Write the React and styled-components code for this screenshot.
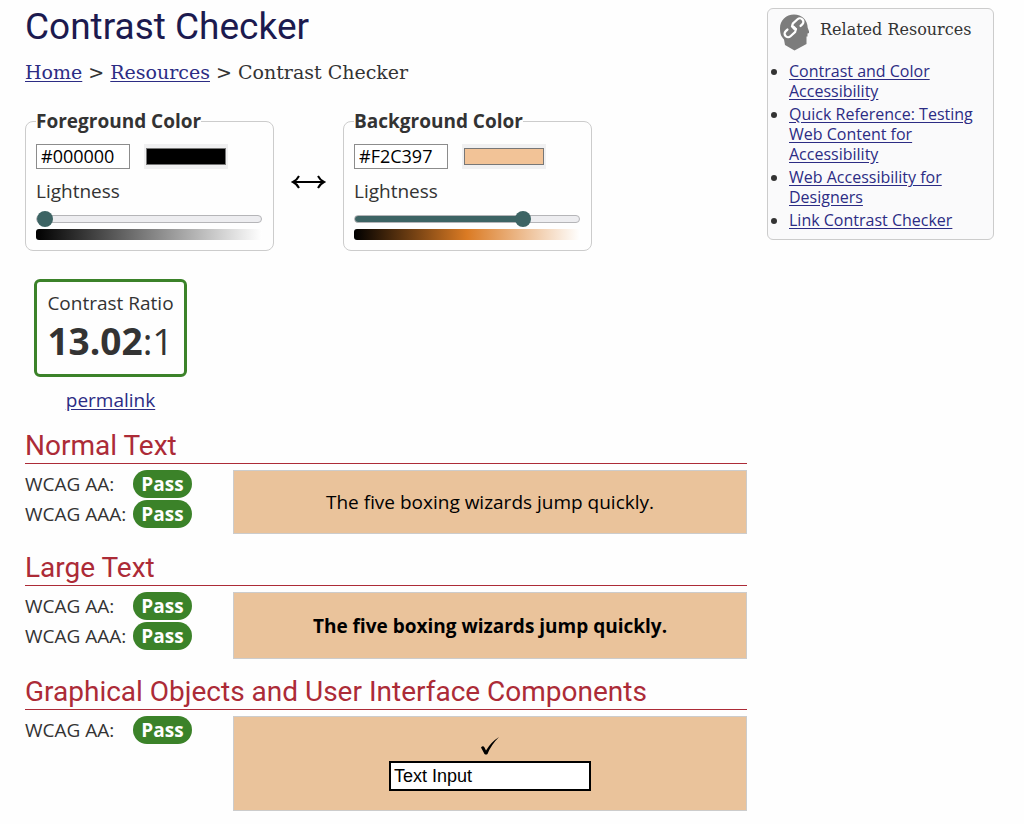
import React, { useState } from 'react';
import styled, { createGlobalStyle } from 'styled-components';

const GlobalStyle = createGlobalStyle`
  * { box-sizing: border-box; }
  body {
    margin: 0;
    background: #fefefe;
    color: #333;
    font-family: "Open Sans", "Noto Sans", sans-serif;
    font-size: 19px;
    line-height: 24px;
  }
  a { color: #2c2c84; text-underline-offset: 2px; }
`;

const Page = styled.div`
  display: flex;
  align-items: flex-start;
  gap: 20px;
  padding: 4px 30px 14px 25px;
`;

const Main = styled.main`
  flex: 1;
  min-width: 0;
`;

const Title = styled.h1`
  margin: 0;
  font: 400 37px/46px Roboto, sans-serif;
  color: #1c1a4f;
`;

const Breadcrumb = styled.nav`
  margin-top: 10px;
  font: 19px/24px "DejaVu Serif", serif;
`;

const Pickers = styled.div`
  display: flex;
  align-items: center;
  gap: 16px;
  margin-top: 25px;
`;

const Picker = styled.fieldset`
  width: 249px;
  margin: 0;
  padding: 11px 11px 10px 10px;
  border: 1px solid #ccc;
  border-radius: 8px;
`;

const Legend = styled.legend`
  padding: 0;
  font-weight: 700;
`;

const ColorRow = styled.div`
  display: flex;
  gap: 14px;
`;

const HexInput = styled.input`
  width: 94px;
  height: 25px;
  padding: 0 4px 2px;
  border: 1px solid #8c8c8c;
  border-radius: 0;
  background: #fff;
  color: #000;
  font: 18px/22px "Open Sans", "Noto Sans", sans-serif;
`;

const Swatch = styled.input`
  width: 84px;
  height: 25px;
  padding: 4px 2px;
  border: 0;
  background: #f0f0f1;
  &::-webkit-color-swatch-wrapper { padding: 0; }
  &::-webkit-color-swatch { border: 1px solid #777; }
`;

const RangeLabel = styled.label`
  display: block;
  margin-top: 10px;
`;

const Range = styled.input`
  display: block;
  width: 100%;
  height: 16px;
  margin: 8px 0 2px;
  appearance: none;
  background: transparent;
  &::-webkit-slider-runnable-track {
    height: 8px;
    border: 1px solid #b5b5b8;
    border-radius: 4px;
    background: linear-gradient(#3d6464, #3d6464) 0 0 / var(--fill) 100% no-repeat border-box, #ededf0;
  }
  &::-webkit-slider-thumb {
    appearance: none;
    width: 16px;
    height: 16px;
    margin-top: -5px;
    border-radius: 50%;
    background: #3d6464;
  }
`;

const Scale = styled.div`
  height: 11px;
  border-radius: 3px;
  background: linear-gradient(to right, #000, ${(p) => p.$middle}, #fff);
`;

const SwapButton = styled.button`
  display: flex;
  padding: 0;
  margin-top: 4px;
  border: 0;
  background: none;
  color: #000;
`;

const Result = styled.div`
  display: flex;
  flex-direction: column;
  align-items: center;
  width: 153px;
  margin: 28px 0 0 9px;
`;

const RatioBox = styled.div`
  width: 100%;
  height: 98px;
  padding: 9px 0;
  border: 3px solid #3b8229;
  border-radius: 6px;
  text-align: center;
`;

const Ratio = styled.div`
  font-size: 37px;
  line-height: 52px;
  b { font-weight: 700; }
`;

const Permalink = styled.a`
  margin-top: 11px;
`;

const Level = styled.section`
  margin-top: ${(p) => p.$gap}px;
`;

const Heading = styled.h2`
  margin: 0 0 6px;
  border-bottom: 1px solid #ac2b37;
  font: 400 28px/35px Roboto, sans-serif;
  color: #ac2b37;
`;

const Columns = styled.div`
  display: grid;
  grid-template-columns: 208px 1fr;
  align-items: start;
`;

const Checks = styled.dl`
  display: grid;
  grid-template-columns: 108px 59px;
  row-gap: 2px;
  line-height: 28px;
  margin: 0;
`;

const Verdict = styled.dd`
  margin: 0;
  border-radius: 14px;
  background: #3b8229;
  color: #fff;
  font-weight: 700;
  text-align: center;
`;

const Sample = styled.div`
  display: flex;
  flex-direction: column;
  align-items: center;
  justify-content: center;
  height: ${(p) => p.$height}px;
  border: 1px solid #ccc;
  background: #eac39b;
  color: #000;
  font-weight: ${(p) => (p.$large ? 700 : 400)};
`;

const SampleInput = styled.input`
  width: 202px;
  height: 30px;
  margin-top: 5px;
  padding: 0 3px;
  border: 2px solid #000;
  background: #fff;
  color: #000;
  font: 18px "Liberation Sans", Arial, sans-serif;
`;

const Related = styled.aside`
  flex: 0 0 227px;
  margin-top: 4px;
  padding: 5px 11px 9px;
  border: 1px solid #ccc;
  border-radius: 6px;
  background: #fafafb;
`;

const RelatedTitle = styled.h2`
  display: flex;
  gap: 11px;
  margin: 0;
  font: 400 16px/31px "DejaVu Serif", serif;
  white-space: nowrap;
`;

const RelatedList = styled.ul`
  display: flex;
  flex-direction: column;
  gap: 3px;
  margin: 10px 0 0;
  padding-left: 10px;
  font-size: 16px;
  line-height: 20px;
`;

function HeadIcon() {
  return (
    <svg width="30" height="37" viewBox="0 0 30 37" aria-hidden="true">
      <path
        fill="#7c7c7c"
        d="M15 0.500C7 0.500 1 6.500 1 14c0 6 1 8 4 11.500l1 5.500 9.500 5.500L27.500 30v-7.500h1V19.500l2-0.800-1.800-5C28.500 6 23 0.500 15 0.500Z"
      />
      <g fill="none" stroke="#fff" strokeWidth="2.300" strokeLinecap="round">
        <path transform="translate(18.500 10) rotate(-42)" d="M-4.500 2.800A3.700 3.700 0 0 1-3 -3.500H3.200a3.500 3.500 0 0 1 0 7H1" />
        <path transform="translate(11.500 17.500) rotate(138)" d="M-4.500 2.800A3.700 3.700 0 0 1-3 -3.500H3.200a3.500 3.500 0 0 1 0 7H1" />
      </g>
    </svg>
  );
}

function SwapIcon() {
  return (
    <svg width="37" height="16" viewBox="0 0 37 16" fill="none" stroke="currentColor" strokeWidth="2" aria-hidden="true">
      <path d="M3 8h31M9 2Q7 6 3 8q4 2 6 6M28 2q2 4 6 6-4 2-6 6" />
    </svg>
  );
}

function ColorPicker({ id, name, hex, onHex, lightness, middle }) {
  const [value, setValue] = useState(lightness);
  return (
    <Picker>
      <Legend>{name}</Legend>
      <ColorRow>
        <HexInput aria-label={`${name} hex value`} value={hex} onChange={(e) => onHex(e.target.value)} />
        <Swatch
          type="color"
          aria-label={`${name} picker`}
          value={hex.toLowerCase()}
          onChange={(e) => onHex(e.target.value.toUpperCase())}
        />
      </ColorRow>
      <RangeLabel htmlFor={id}>Lightness</RangeLabel>
      <Range
        id={id}
        type="range"
        min="0"
        max="100"
        value={value}
        onChange={(e) => setValue(Number(e.target.value))}
        style={{ '--fill': `${value}%` }}
      />
      <Scale $middle={middle} />
    </Picker>
  );
}

function Conformance({ title, levels, gap, children }) {
  return (
    <Level $gap={gap}>
      <Heading>{title}</Heading>
      <Columns>
        <Checks>
          {levels.map((level) => (
            <React.Fragment key={level}>
              <dt>WCAG {level}:</dt>
              <Verdict>Pass</Verdict>
            </React.Fragment>
          ))}
        </Checks>
        {children}
      </Columns>
    </Level>
  );
}

const resources = [
  'Contrast and Color Accessibility',
  'Quick Reference: Testing Web Content for Accessibility',
  'Web Accessibility for Designers',
  'Link Contrast Checker',
];

export default function App() {
  const [fore, setFore] = useState('#000000');
  const [back, setBack] = useState('#F2C397');
  const swap = () => {
    setFore(back);
    setBack(fore);
  };

  return (
    <>
      <GlobalStyle />
      <Page>
        <Main>
          <Title>Contrast Checker</Title>
          <Breadcrumb aria-label="Breadcrumb">
            <a href="#home">Home</a> &gt; <a href="#resources">Resources</a> &gt; Contrast Checker
          </Breadcrumb>

          <Pickers>
            <ColorPicker id="fore" name="Foreground Color" hex={fore} onHex={setFore} lightness={0} middle="#808080" />
            <SwapButton type="button" aria-label="Swap colors" onClick={swap}>
              <SwapIcon />
            </SwapButton>
            <ColorPicker id="back" name="Background Color" hex={back} onHex={setBack} lightness={77} middle="#db7b24" />
          </Pickers>

          <Result>
            <RatioBox>
              Contrast Ratio
              <Ratio>
                <b>13.02</b>:1
              </Ratio>
            </RatioBox>
            <Permalink href="#permalink">permalink</Permalink>
          </Result>

          <Conformance title="Normal Text" levels={['AA', 'AAA']} gap={16}>
            <Sample $height={64}>The five boxing wizards jump quickly.</Sample>
          </Conformance>
          <Conformance title="Large Text" levels={['AA', 'AAA']} gap={16}>
            <Sample $height={67} $large>
              The five boxing wizards jump quickly.
            </Sample>
          </Conformance>
          <Conformance title="Graphical Objects and User Interface Components" levels={['AA']} gap={15}>
            <Sample $height={95}>
              <svg width="20" height="20" viewBox="0 0 20 20" role="img" aria-label="Check mark">
                <path d="M1 11.500q2-2.500 3.500 0l1.500 3Q11 6 19 1 11 9 7.500 18q-1.500 1-3 0Z" />
              </svg>
              <SampleInput aria-label="Text input sample" defaultValue="Text Input" />
            </Sample>
          </Conformance>
        </Main>

        <Related>
          <RelatedTitle>
            <HeadIcon />
            Related Resources
          </RelatedTitle>
          <RelatedList>
            {resources.map((name) => (
              <li key={name}>
                <a href="#resource">{name}</a>
              </li>
            ))}
          </RelatedList>
        </Related>
      </Page>
    </>
  );
}
